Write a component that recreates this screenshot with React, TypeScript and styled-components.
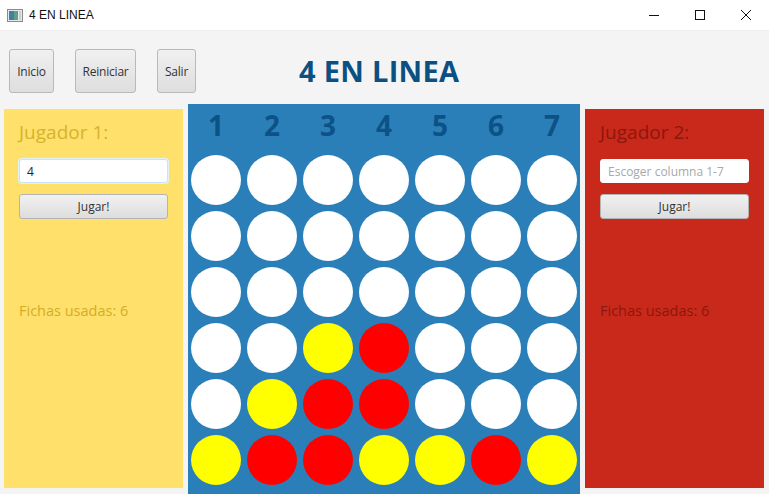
import React from "react";
import styled, { createGlobalStyle } from "styled-components";

const Global = createGlobalStyle`
  html, body { margin: 0; padding: 0; background: #f4f4f4; }
  body { font-family: "Open Sans", "Noto Sans", sans-serif; }
  * { box-sizing: border-box; }
`;

const Window = styled.div`
  width: 769px;
  height: 494px;
  display: flex;
  flex-direction: column;
  background: #f4f4f4;
  overflow: hidden;
`;

const TitleBar = styled.div`
  height: 31px;
  flex: none;
  background: #ffffff;
  border-bottom: 1px solid #eeeeee;
  display: flex;
  align-items: center;
  padding-left: 7px;
`;

const AppTitle = styled.span`
  font-family: "Liberation Sans", Arial, sans-serif;
  font-size: 12px;
  color: #111;
  margin-left: 6px;
  flex: 1;
`;

const Controls = styled.div`
  display: flex;
  height: 100%;
`;

const Ctl = styled.div`
  width: 46px;
  height: 100%;
  display: flex;
  align-items: center;
  justify-content: center;
`;

const Header = styled.div`
  height: 73px;
  flex: none;
  display: flex;
  align-items: center;
  padding: 0 0 0 9px;
  gap: 21px;
`;

const ToolButton = styled.button<{ $w: number }>`
  width: ${(p) => p.$w}px;
  height: 44px;
  padding: 0;
  border: 1px solid #b9b9b9;
  border-radius: 3px;
  background: linear-gradient(#f0f0f0, #dedede);
  font-family: "Open Sans", sans-serif;
  font-size: 12px;
  letter-spacing: -0.2px;
  color: #333;
  margin-top: 7px;
`;

const BigTitle = styled.h1`
  margin: 5px 0 0 82px;
  font-family: "Open Sans", sans-serif;
  font-weight: 700;
  font-size: 29px;
  color: #0b5083;
  letter-spacing: 0.3px;
`;

const Main = styled.div`
  flex: 1;
  display: flex;
  gap: 5px;
  padding-left: 4px;
`;

const Side = styled.div<{ $bg: string }>`
  width: 179px;
  height: 379px;
  margin-top: 5px;
  background: ${(p) => p.$bg};
  padding: 10px 15px 0 15px;
  display: flex;
  flex-direction: column;
`;

const PlayerLabel = styled.div<{ $c: string }>`
  font-size: 19px;
  line-height: 27px;
  color: ${(p) => p.$c};
  margin-bottom: 13px;
`;

const Input = styled.input<{ $focus?: boolean }>`
  width: 149px;
  height: 24px;
  border: 1px solid ${(p) => (p.$focus ? "#c6e4f2" : "#ffffff")};
  box-shadow: ${(p) => (p.$focus ? "0 0 0 1px #e3f2f8" : "none")};
  border-radius: 3px;
  background: #fff;
  padding: 0 7px;
  font-family: "Open Sans", sans-serif;
  font-size: 12px;
  color: #222;
  outline: none;
  &::placeholder { color: #a8a8a8; }
`;

const PlayButton = styled.button`
  width: 149px;
  height: 25px;
  margin-top: 11px;
  border: 1px solid #b4b4b4;
  border-radius: 3px;
  background: linear-gradient(#f1f1f1, #dddddd);
  font-family: "Open Sans", sans-serif;
  font-size: 12px;
  color: #333;
`;

const Count = styled.div<{ $c: string }>`
  margin-top: 82px;
  font-size: 14.5px;
  color: ${(p) => p.$c};
`;

const Board = styled.div`
  width: 392px;
  background: #2a7fb8;
  padding: 0 3px;
  display: flex;
  flex-direction: column;
`;

const Numbers = styled.div`
  display: grid;
  grid-template-columns: repeat(7, 50px);
  column-gap: 6px;
  height: 44px;
  margin-bottom: 7px;
`;

const Num = styled.div`
  text-align: center;
  font-weight: 700;
  font-size: 28px;
  line-height: 42px;
  color: #0c5287;
`;

const Grid = styled.div`
  display: grid;
  grid-template-columns: repeat(7, 50px);
  grid-auto-rows: 50px;
  gap: 6px;
`;

const Cell = styled.div<{ $c: string }>`
  width: 50px;
  height: 50px;
  border-radius: 50%;
  background: ${(p) => p.$c};
`;

const W = "#ffffff";
const Y = "#ffff00";
const R = "#ff0000";

const rows = [
  [W, W, W, W, W, W, W],
  [W, W, W, W, W, W, W],
  [W, W, W, W, W, W, W],
  [W, W, Y, R, W, W, W],
  [W, Y, R, R, W, W, W],
  [Y, R, R, Y, Y, R, Y],
];

export default function App() {
  return (
    <Window>
      <Global />
      <TitleBar>
        <svg width="16" height="13" viewBox="0 0 16 13">
          <rect x="0.5" y="0.5" width="15" height="12" fill="#e8e8e8" stroke="#8a8a8a" />
          <rect x="2" y="2" width="9" height="9" fill="#5f9e8a" />
          <rect x="2" y="2" width="5" height="9" fill="#3f7fa0" />
          <rect x="12" y="2" width="2" height="9" fill="#cfcfcf" />
        </svg>
        <AppTitle>4 EN LINEA</AppTitle>
        <Controls>
          <Ctl>
            <svg width="10" height="10" viewBox="0 0 10 10">
              <line x1="0" y1="5.5" x2="10" y2="5.5" stroke="#111" strokeWidth="1" />
            </svg>
          </Ctl>
          <Ctl>
            <svg width="10" height="10" viewBox="0 0 10 10">
              <rect x="0.5" y="0.5" width="9" height="9" fill="none" stroke="#111" strokeWidth="1" />
            </svg>
          </Ctl>
          <Ctl>
            <svg width="10" height="10" viewBox="0 0 10 10">
              <path d="M0 0 L10 10 M10 0 L0 10" stroke="#111" strokeWidth="1" />
            </svg>
          </Ctl>
        </Controls>
      </TitleBar>
      <Header>
        <ToolButton $w={45}>Inicio</ToolButton>
        <ToolButton $w={61}>Reiniciar</ToolButton>
        <ToolButton $w={39}>Salir</ToolButton>
        <BigTitle>4 EN LINEA</BigTitle>
      </Header>
      <Main>
        <Side $bg="#ffe06a">
          <PlayerLabel $c="#d8b22c">Jugador 1:</PlayerLabel>
          <Input $focus defaultValue="4" />
          <PlayButton>Jugar!</PlayButton>
          <Count $c="#d4ad28">Fichas usadas: 6</Count>
        </Side>
        <Board>
          <Numbers>
            {[1, 2, 3, 4, 5, 6, 7].map((n) => (
              <Num key={n}>{n}</Num>
            ))}
          </Numbers>
          <Grid>
            {rows.flatMap((r, i) => r.map((c, j) => <Cell key={`${i}-${j}`} $c={c} />))}
          </Grid>
        </Board>
        <Side $bg="#c9291a">
          <PlayerLabel $c="#8c170c">Jugador 2:</PlayerLabel>
          <Input placeholder="Escoger columna 1-7" />
          <PlayButton>Jugar!</PlayButton>
          <Count $c="#8c170c">Fichas usadas: 6</Count>
        </Side>
      </Main>
    </Window>
  );
}
